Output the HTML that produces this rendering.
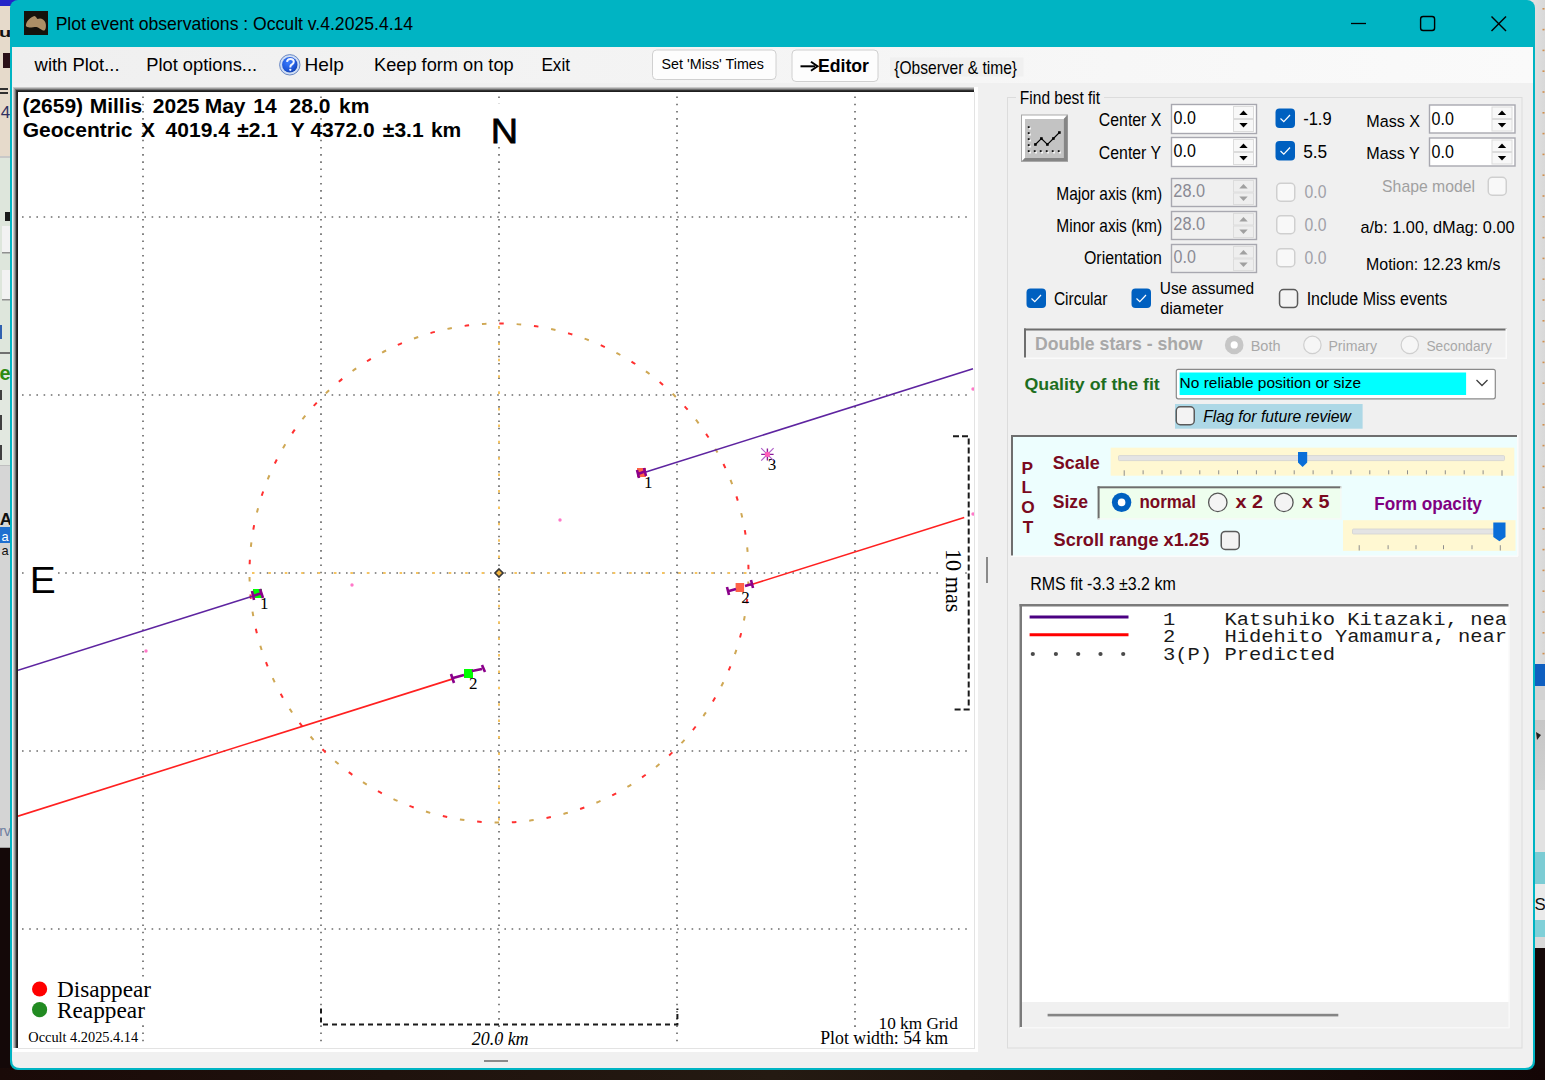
<!DOCTYPE html>
<html><head><meta charset="utf-8"><style>
html,body{margin:0;padding:0;width:1545px;height:1080px;overflow:hidden;background:#140808}
svg text{white-space:pre}
</style></head><body>
<svg width="1545" height="1080" viewBox="0 0 1545 1080" style="display:block">
<rect x="0" y="0" width="1545" height="1080" fill="#140808" />
<defs><linearGradient id="dk" x1="0" x2="1" y1="0" y2="0"><stop offset="0" stop-color="#1a0a08"/><stop offset="0.5" stop-color="#241a12"/><stop offset="1" stop-color="#140606"/></linearGradient></defs>
<rect x="0" y="1068" width="1545" height="12" fill="url(#dk)" />
<rect x="0" y="0" width="24" height="6" fill="#2424C8" />
<rect x="0" y="6" width="20" height="150" fill="#E6DACB" />
<text transform="translate(0.00,37.00) scale(1.5625,1)" x="-0.60" y="0" font-family="Liberation Sans" font-size="12.80" font-weight="bold" font-style="normal" fill="#101010" >u</text>
<rect x="3" y="53" width="7" height="15" fill="#2a1018" />
<rect x="0" y="88" width="8" height="2" fill="#303030" />
<rect x="0" y="92" width="8" height="2" fill="#303030" />
<text x="0.73" y="118.00" font-family="Liberation Sans" font-size="17.07" font-weight="normal" font-style="normal" fill="#303060" >4</text>
<rect x="0" y="156" width="10" height="2" fill="#C8C8C8" />
<rect x="0" y="158" width="10" height="195" fill="#DEE6DC" />
<rect x="5" y="212" width="5" height="9" fill="#1a1a1a" />
<rect x="2" y="226" width="8" height="27" fill="#F2F2F2" />
<rect x="2" y="252" width="8" height="1.5" fill="#909090" />
<rect x="2" y="270" width="8" height="30" fill="#F2F2F2" />
<rect x="2" y="299" width="8" height="1.5" fill="#909090" />
<rect x="0" y="325" width="2" height="14" fill="#3060B0" />
<rect x="0" y="352" width="10" height="2" fill="#707070" />
<rect x="0" y="354" width="10" height="111" fill="#E2E8E0" />
<text x="-0.62" y="380.00" font-family="Liberation Sans" font-size="19.91" font-weight="bold" font-style="normal" fill="#2E8A10" >er</text>
<rect x="0" y="390" width="2" height="10" fill="#404040" />
<rect x="0" y="415" width="2" height="15" fill="#404040" />
<rect x="0" y="445" width="2" height="15" fill="#404040" />
<rect x="0" y="465" width="10" height="1" fill="#C0C0C0" />
<rect x="0" y="466" width="10" height="61" fill="#D6D6D6" />
<text x="-0.27" y="525.00" font-family="Liberation Sans" font-size="17.07" font-weight="bold" font-style="normal" fill="#101010" >A</text>
<rect x="0" y="527" width="10" height="16" fill="#1F6FD0" />
<text x="1.60" y="541.00" font-family="Liberation Sans" font-size="12.80" font-weight="normal" font-style="normal" fill="#FFFFFF" >a</text>
<rect x="0" y="543" width="10" height="304" fill="#D4D4D4" />
<text x="1.60" y="555.00" font-family="Liberation Sans" font-size="12.80" font-weight="normal" font-style="normal" fill="#101010" >a</text>
<text x="-0.89" y="836.00" font-family="Liberation Sans" font-size="14.22" font-weight="normal" font-style="normal" fill="#6E7EA0" >rv</text>
<rect x="0" y="847" width="10" height="1" fill="#A0A0A0" />
<defs><linearGradient id="rs" x1="0" x2="1" y1="0" y2="0"><stop offset="0" stop-color="#EAEAEA"/><stop offset="1" stop-color="#D8D8D8"/></linearGradient></defs>
<rect x="1520" y="0" width="25" height="664" fill="url(#rs)" />
<rect x="1542.5" y="8.0" width="2" height="1.6" fill="#D09050" />
<rect x="1542.5" y="28.8" width="2" height="1.6" fill="#D09050" />
<rect x="1542.5" y="49.6" width="2" height="1.6" fill="#D09050" />
<rect x="1542.5" y="70.4" width="2" height="1.6" fill="#D09050" />
<rect x="1542.5" y="91.2" width="2" height="1.6" fill="#D09050" />
<rect x="1542.5" y="112.0" width="2" height="1.6" fill="#D09050" />
<rect x="1542.5" y="132.8" width="2" height="1.6" fill="#D09050" />
<rect x="1542.5" y="153.6" width="2" height="1.6" fill="#D09050" />
<rect x="1542.5" y="174.4" width="2" height="1.6" fill="#D09050" />
<rect x="1542.5" y="195.20000000000002" width="2" height="1.6" fill="#D09050" />
<rect x="1542.5" y="216.0" width="2" height="1.6" fill="#D09050" />
<rect x="1542.5" y="236.8" width="2" height="1.6" fill="#D09050" />
<rect x="1542.5" y="257.6" width="2" height="1.6" fill="#D09050" />
<rect x="1542.5" y="278.40000000000003" width="2" height="1.6" fill="#D09050" />
<rect x="1542.5" y="299.2" width="2" height="1.6" fill="#D09050" />
<rect x="1542.5" y="320.0" width="2" height="1.6" fill="#D09050" />
<rect x="1542.5" y="340.8" width="2" height="1.6" fill="#D09050" />
<rect x="1542.5" y="361.6" width="2" height="1.6" fill="#D09050" />
<rect x="1542.5" y="382.40000000000003" width="2" height="1.6" fill="#D09050" />
<rect x="1542.5" y="403.2" width="2" height="1.6" fill="#D09050" />
<rect x="1542.5" y="424.0" width="2" height="1.6" fill="#D09050" />
<rect x="1542.5" y="444.8" width="2" height="1.6" fill="#D09050" />
<rect x="1542.5" y="465.6" width="2" height="1.6" fill="#D09050" />
<rect x="1542.5" y="486.40000000000003" width="2" height="1.6" fill="#D09050" />
<rect x="1542.5" y="507.20000000000005" width="2" height="1.6" fill="#D09050" />
<rect x="1542.5" y="528.0" width="2" height="1.6" fill="#D09050" />
<rect x="1542.5" y="548.8000000000001" width="2" height="1.6" fill="#D09050" />
<rect x="1542.5" y="569.6" width="2" height="1.6" fill="#D09050" />
<rect x="1542.5" y="590.4" width="2" height="1.6" fill="#D09050" />
<rect x="1542.5" y="611.2" width="2" height="1.6" fill="#D09050" />
<rect x="1542.5" y="632.0" width="2" height="1.6" fill="#D09050" />
<rect x="1542.5" y="652.8000000000001" width="2" height="1.6" fill="#D09050" />
<rect x="1535" y="664" width="10" height="22" fill="#0F5FC0" />
<rect x="1535" y="686" width="10" height="14" fill="#D2D2D2" />
<defs><linearGradient id="rs2" x1="0" x2="0" y1="0" y2="1"><stop offset="0" stop-color="#C4C4C4"/><stop offset="1" stop-color="#D0D0D0"/></linearGradient></defs>
<rect x="1535" y="700" width="10" height="90" fill="url(#rs2)" />
<path d="M1536,732 L1541,735 L1537,740 Z" fill="#202020"/>
<rect x="1535" y="700" width="10" height="20" fill="#D8D8D8" />
<rect x="1535" y="790" width="10" height="62" fill="#E2E2E2" />
<rect x="1535" y="852" width="10" height="32" fill="#7CCCD4" />
<rect x="1535" y="884" width="10" height="36" fill="#EAEAEA" />
<text transform="translate(1535.00,910.00) scale(0.9868,1)" x="-0.53" y="0" font-family="Liberation Sans" font-size="17.07" font-weight="normal" font-style="normal" fill="#101010" >S</text>
<rect x="1535" y="920" width="10" height="17" fill="#80D0D8" />
<rect x="1535" y="937" width="10" height="11" fill="#D8D8D8" />
<rect x="10" y="0" width="1525" height="1070" rx="8" ry="8" fill="#00B4C3"/>
<path d="M12,47 H1533 V1060 Q1533,1068 1525,1068 H20 Q12,1068 12,1060 Z" fill="#F0F0F0"/>
<defs><linearGradient id="mg" x1="0" x2="1" y1="0" y2="0"><stop offset="0" stop-color="#EFEFEF"/><stop offset="1" stop-color="#FAFAFA"/></linearGradient></defs>
<rect x="12" y="47" width="1521" height="36" fill="url(#mg)" />
<rect x="24" y="11" width="24" height="24" fill="#15120C" />
<path d="M25.9,25.6 C26,21 31,17 34.4,16 C36,16 36.5,18.5 37.5,19 C39,18.5 41,18 43,19.5 C45.5,21 46.2,24 45.9,27 C45.5,30 44.5,31 43,30.5 C40.5,29 38.5,27.5 36.5,26.9 C33.5,27 30.5,27.8 28.5,27.3 C26.5,27 25.8,26.5 25.9,25.6 Z" fill="#AD8F66"/>
<text transform="translate(57.00,29.60) scale(1.0063,1)" x="-1.37" y="0" font-family="Liberation Sans" font-size="17.49" font-weight="normal" font-style="normal" fill="#000" >Plot event observations : Occult v.4.2025.4.14</text>
<line x1="1351.00" y1="23.50" x2="1366.00" y2="23.50" stroke="#000" stroke-width="1.3" />
<rect x="1420.6" y="16.5" width="14" height="14" rx="2.5" fill="none" stroke="#000" stroke-width="1.4"/>
<line x1="1491.50" y1="16.50" x2="1506.00" y2="31.00" stroke="#000" stroke-width="1.4" />
<line x1="1506.00" y1="16.50" x2="1491.50" y2="31.00" stroke="#000" stroke-width="1.4" />
<text transform="translate(34.30,71.10) scale(0.9976,1)" x="0.29" y="0" font-family="Liberation Sans" font-size="18.49" font-weight="normal" font-style="normal" fill="#000" >with Plot...</text>
<text transform="translate(147.60,71.10) scale(0.9907,1)" x="-1.44" y="0" font-family="Liberation Sans" font-size="18.49" font-weight="normal" font-style="normal" fill="#000" >Plot options...</text>
<defs><radialGradient id="hg" cx="0.4" cy="0.35" r="0.7"><stop offset="0" stop-color="#3A7CFF"/><stop offset="0.7" stop-color="#1E56D8"/><stop offset="1" stop-color="#123EA8"/></radialGradient></defs>
<circle cx="289.8" cy="64.8" r="10.2" fill="#D0DEF4" stroke="#6A88C4" stroke-width="1"/>
<circle cx="289.8" cy="64.8" r="7.7" fill="url(#hg)"/>
<path d="M287,61.8 C287.2,59.6 288.8,58.9 290.4,58.9 C292.4,58.9 293.8,60 293.8,61.7 C293.8,63.4 292.4,64.1 291.3,64.9 C290.5,65.5 290.3,66.2 290.3,67.4" stroke="#F0F4FF" stroke-width="2" fill="none"/>
<circle cx="290.3" cy="69.8" r="1.15" fill="#F0F4FF"/>
<text transform="translate(306.00,71.10) scale(1.0326,1)" x="-1.44" y="0" font-family="Liberation Sans" font-size="18.49" font-weight="normal" font-style="normal" fill="#000" >Help</text>
<text transform="translate(375.40,71.10) scale(0.9854,1)" x="-1.44" y="0" font-family="Liberation Sans" font-size="18.49" font-weight="normal" font-style="normal" fill="#000" >Keep form on top</text>
<text transform="translate(542.70,71.10) scale(0.9273,1)" x="-1.44" y="0" font-family="Liberation Sans" font-size="18.49" font-weight="normal" font-style="normal" fill="#000" >Exit</text>
<rect x="652.5" y="50" width="123.5" height="29.5" rx="4" fill="#FDFDFD" stroke="#D0D0D0" stroke-width="1"/>
<text transform="translate(662.00,69.30) scale(0.9959,1)" x="-0.45" y="0" font-family="Liberation Sans" font-size="14.36" font-weight="normal" font-style="normal" fill="#000" >Set 'Miss' Times</text>
<rect x="792" y="50" width="86" height="31.5" rx="4" fill="#FDFDFD" stroke="#D0D0D0" stroke-width="1"/>
<path d="M800.5,66.3 H815" stroke="#000" stroke-width="2"/><path d="M811,61.8 L817.5,66.3 L811,70.8" stroke="#000" stroke-width="2" fill="none"/>
<text transform="translate(819.00,72.40) scale(0.9559,1)" x="-1.16" y="0" font-family="Liberation Sans" font-size="18.49" font-weight="bold" font-style="normal" fill="#000" >Editor</text>
<rect x="890" y="57.4" width="133.5" height="19.1" fill="#F0F0F0" />
<text transform="translate(894.50,74.00) scale(0.8228,1)" x="-0.30" y="0" font-family="Liberation Sans" font-size="18.92" font-weight="normal" font-style="normal" fill="#000" >{Observer &amp; time}</text>
<rect x="13" y="87" width="965" height="965" fill="#FFFFFF" />
<rect x="13" y="87" width="961" height="1" fill="#C8C8C8" />
<rect x="13" y="87" width="1" height="961" fill="#C8C8C8" />
<rect x="14" y="88" width="960" height="1" fill="#A0A0A0" />
<rect x="14" y="88" width="1" height="960" fill="#A0A0A0" />
<rect x="15" y="89" width="959" height="1" fill="#707070" />
<rect x="15" y="89" width="1" height="959" fill="#707070" />
<rect x="16" y="90" width="958" height="1" fill="#303030" />
<rect x="16" y="90" width="1" height="958" fill="#303030" />
<rect x="17" y="91" width="957" height="1" fill="#1E1E1E" />
<rect x="17" y="91" width="1" height="957" fill="#1E1E1E" />
<rect x="974" y="92" width="1" height="957" fill="#E3E3E3" />
<rect x="18" y="1048" width="957" height="1" fill="#E3E3E3" />
<svg x="18" y="92" width="956" height="956" overflow="hidden"><g transform="translate(-18,-92)">
<line x1="143.00" y1="96.50" x2="143.00" y2="1047.00" stroke="#6E6E6E" stroke-width="1.7" stroke-dasharray="1.6 5.6"/>
<line x1="321.00" y1="96.50" x2="321.00" y2="1047.00" stroke="#6E6E6E" stroke-width="1.7" stroke-dasharray="1.6 5.6"/>
<line x1="499.00" y1="96.50" x2="499.00" y2="1047.00" stroke="#6E6E6E" stroke-width="1.7" stroke-dasharray="1.6 5.6"/>
<line x1="677.00" y1="96.50" x2="677.00" y2="1047.00" stroke="#6E6E6E" stroke-width="1.7" stroke-dasharray="1.6 5.6"/>
<line x1="855.00" y1="96.50" x2="855.00" y2="1047.00" stroke="#6E6E6E" stroke-width="1.7" stroke-dasharray="1.6 5.6"/>
<line x1="22.00" y1="217.00" x2="968.00" y2="217.00" stroke="#6E6E6E" stroke-width="1.7" stroke-dasharray="1.6 5.6"/>
<line x1="22.00" y1="395.00" x2="968.00" y2="395.00" stroke="#6E6E6E" stroke-width="1.7" stroke-dasharray="1.6 5.6"/>
<line x1="22.00" y1="573.00" x2="968.00" y2="573.00" stroke="#6E6E6E" stroke-width="1.7" stroke-dasharray="1.6 5.6"/>
<line x1="22.00" y1="751.00" x2="968.00" y2="751.00" stroke="#6E6E6E" stroke-width="1.7" stroke-dasharray="1.6 5.6"/>
<line x1="22.00" y1="929.00" x2="968.00" y2="929.00" stroke="#6E6E6E" stroke-width="1.7" stroke-dasharray="1.6 5.6"/>
<line x1="499.00" y1="323.50" x2="499.00" y2="822.50" stroke="#F6C460" stroke-width="2" stroke-dasharray="2.5 13.9" stroke-dashoffset="-2.5"/>
<line x1="249.50" y1="573.00" x2="748.50" y2="573.00" stroke="#F6C460" stroke-width="2" stroke-dasharray="2.5 13.9" stroke-dashoffset="-2.5"/>
<circle cx="499" cy="573" r="249.5" fill="none" stroke="#FF3030" stroke-width="2" stroke-dasharray="4.5 30.337" stroke-dashoffset="8.9"/>
<circle cx="499" cy="573" r="249.5" fill="none" stroke="#CFA855" stroke-width="2" stroke-dasharray="4.5 30.337" stroke-dashoffset="-8.518"/>
<path d="M499,569 L503,573 L499,577 L495,573 Z" fill="#F2B440" stroke="#383838" stroke-width="1.7"/>
<line x1="18.00" y1="670.24" x2="254.00" y2="595.73" stroke="#5E24A0" stroke-width="1.6" />
<line x1="645.00" y1="472.29" x2="973.00" y2="368.74" stroke="#5E24A0" stroke-width="1.6" />
<line x1="18.00" y1="816.14" x2="452.00" y2="679.12" stroke="#FF2020" stroke-width="1.6" />
<line x1="750.00" y1="585.04" x2="964.20" y2="517.42" stroke="#FF2020" stroke-width="1.6" />
<rect x="253" y="589" width="9" height="9" fill="#00FF00" />
<path d="M253,596 L262,593 M252,591 L254,600 M260,589 L263,598" stroke="#8B008B" stroke-width="2.6" fill="none"/>
<rect x="637" y="468" width="9" height="9" fill="#FF6347" />
<path d="M638,474 L646,471 M637,470 L639,478 M644,468 L646,476" stroke="#8B008B" stroke-width="2.6" fill="none"/>
<rect x="464" y="669" width="9" height="9" fill="#00FF00" />
<path d="M453,678 L464,675 M472,671 L482,669 M451,674 L454,683 M482,665 L485,672" stroke="#8B008B" stroke-width="2.6" fill="none"/>
<rect x="735.6" y="583" width="8.5" height="9" fill="#FF6347" />
<path d="M729,591 L736,589 M745,586 L752,584 M727,587 L729,595 M751,580 L753,588" stroke="#8B008B" stroke-width="2.6" fill="none"/>
<text x="260.07" y="609.00" font-family="Liberation Serif" font-size="17.00" font-weight="normal" font-style="normal" fill="#000" >1</text>
<text x="644.07" y="488.00" font-family="Liberation Serif" font-size="17.00" font-weight="normal" font-style="normal" fill="#000" >1</text>
<text x="468.97" y="688.80" font-family="Liberation Serif" font-size="17.00" font-weight="normal" font-style="normal" fill="#000" >2</text>
<text x="741.37" y="603.30" font-family="Liberation Serif" font-size="17.00" font-weight="normal" font-style="normal" fill="#000" >2</text>
<text x="767.70" y="469.60" font-family="Liberation Serif" font-size="17.00" font-weight="normal" font-style="normal" fill="#000" >3</text>
<path d="M761.1999999999999,454.4 L773.6,454.4 M767.4,448.4 L767.4,460.4" stroke="#8A1A9A" stroke-width="1.4" fill="none"/>
<path d="M761.1999999999999,448.2 L773.6,460.59999999999997 M773.6,448.2 L761.1999999999999,460.59999999999997" stroke="#B060C8" stroke-width="1.2" fill="none"/>
<circle cx="767.4" cy="454.4" r="2.6" fill="#FF5CB8"/>
<circle cx="560" cy="520" r="1.7" fill="#FF78C8"/>
<circle cx="352" cy="585" r="1.7" fill="#FF78C8"/>
<circle cx="146" cy="651" r="1.7" fill="#FF78C8"/>
<circle cx="973" cy="389" r="1.7" fill="#FF78C8"/>
<circle cx="973" cy="514" r="1.7" fill="#FF78C8"/>
<text x="22.42" y="113.00" font-family="Liberation Sans" font-size="21.00" font-weight="bold" font-style="normal" fill="#000" >(2659)</text>
<text x="89.69" y="113.00" font-family="Liberation Sans" font-size="21.00" font-weight="bold" font-style="normal" fill="#000" >Millis</text>
<text x="152.84" y="113.00" font-family="Liberation Sans" font-size="21.00" font-weight="bold" font-style="normal" fill="#000" >2025</text>
<text x="204.69" y="113.00" font-family="Liberation Sans" font-size="21.00" font-weight="bold" font-style="normal" fill="#000" >May</text>
<text x="253.29" y="113.00" font-family="Liberation Sans" font-size="21.00" font-weight="bold" font-style="normal" fill="#000" >14</text>
<text x="289.54" y="113.00" font-family="Liberation Sans" font-size="21.00" font-weight="bold" font-style="normal" fill="#000" >28.0</text>
<text x="339.09" y="113.00" font-family="Liberation Sans" font-size="21.00" font-weight="bold" font-style="normal" fill="#000" >km</text>
<text x="22.74" y="137.00" font-family="Liberation Sans" font-size="21.00" font-weight="bold" font-style="normal" fill="#000" >Geocentric</text>
<text x="141.00" y="137.00" font-family="Liberation Sans" font-size="21.00" font-weight="bold" font-style="normal" fill="#000" >X</text>
<text x="165.60" y="137.00" font-family="Liberation Sans" font-size="21.00" font-weight="bold" font-style="normal" fill="#000" >4019.4</text>
<text x="237.27" y="137.00" font-family="Liberation Sans" font-size="21.00" font-weight="bold" font-style="normal" fill="#000" >±2.1</text>
<text x="290.67" y="137.00" font-family="Liberation Sans" font-size="21.00" font-weight="bold" font-style="normal" fill="#000" >Y</text>
<text x="310.40" y="137.00" font-family="Liberation Sans" font-size="21.00" font-weight="bold" font-style="normal" fill="#000" >4372.0</text>
<text x="382.87" y="137.00" font-family="Liberation Sans" font-size="21.00" font-weight="bold" font-style="normal" fill="#000" >±3.1</text>
<text x="430.89" y="137.00" font-family="Liberation Sans" font-size="21.00" font-weight="bold" font-style="normal" fill="#000" >km</text>
<rect x="488" y="104" width="32" height="42" fill="#fff" />
<text transform="translate(493.80,142.50) scale(1.0779,1)" x="-2.74" y="0" font-family="Liberation Sans" font-size="35.13" font-weight="normal" font-style="normal" fill="#000" stroke="#000" stroke-width="0.75">N</text>
<rect x="26" y="560" width="30" height="38" fill="#fff" />
<text transform="translate(32.70,593.00) scale(1.0782,1)" x="-2.82" y="0" font-family="Liberation Sans" font-size="36.12" font-weight="normal" font-style="normal" fill="#000" >E</text>
<rect x="938" y="545" width="26" height="72" fill="#fff" />
<path d="M953,436.3 H968.7 V709.5 H954" fill="none" stroke="#1A1A1A" stroke-width="2" stroke-dasharray="6 3"/>
<text transform="translate(946.3,549) rotate(90)" x="0" y="0" font-family="Liberation Serif" font-size="22.2" fill="#000">10 mas</text>
<path d="M321,1008.5 V1024.5 H677.4 V1008.5" fill="none" stroke="#1A1A1A" stroke-width="2" stroke-dasharray="5 4"/>
<text x="471.70" y="1044.70" font-family="Liberation Serif" font-size="17.98" font-weight="normal" font-style="italic" fill="#000" >20.0 km</text>
<text x="878.55" y="1028.50" font-family="Liberation Serif" font-size="17.23" font-weight="normal" font-style="normal" fill="#000" >10 km Grid</text>
<rect x="818" y="1030" width="132" height="18" fill="#fff" />
<text x="820.22" y="1043.90" font-family="Liberation Serif" font-size="17.79" font-weight="normal" font-style="normal" fill="#000" >Plot width: 54 km</text>
<rect x="25" y="980" width="127" height="44" fill="#fff" />
<circle cx="39.6" cy="989" r="7.6" fill="#FF0000"/>
<circle cx="39.6" cy="1009.7" r="7.6" fill="#228B22"/>
<text x="56.94" y="996.90" font-family="Liberation Serif" font-size="23.23" font-weight="normal" font-style="normal" fill="#000" >Disappear</text>
<text x="56.94" y="1017.60" font-family="Liberation Serif" font-size="23.30" font-weight="normal" font-style="normal" fill="#000" >Reappear</text>
<text x="28.35" y="1041.50" font-family="Liberation Serif" font-size="14.33" font-weight="normal" font-style="normal" fill="#000" >Occult 4.2025.4.14</text>
</g></svg>
<rect x="986" y="557" width="2" height="26" fill="#8A8A8A" />
<rect x="484" y="1060" width="24" height="2" fill="#8A8A8A" />
<rect x="1007.5" y="97.5" width="514.5" height="950.5" fill="none" stroke="#DCDCDC" stroke-width="1"/>
<rect x="1016" y="90" width="88" height="14" fill="#F0F0F0" />
<text transform="translate(1021.00,103.70) scale(0.8676,1)" x="-1.40" y="0" font-family="Liberation Sans" font-size="17.92" font-weight="normal" font-style="normal" fill="#000" >Find best fit</text>
<rect x="1021" y="114.5" width="47" height="47.5" fill="#A8A8A8" />
<path d="M1022,115.5 H1066.5 L1063.8,119 H1025 V158 L1022,161 Z" fill="#FFFFFF"/>
<path d="M1067.5,115.5 V161 H1022 L1025,158 H1063.8 V119 Z" fill="#858585"/>
<rect x="1025" y="119" width="38.8" height="39" fill="#C3C3C3" />
<rect x="1029.0" y="127.5" width="2" height="2" fill="#F4F4F4" />
<rect x="1027.8" y="126.2" width="1.8" height="1.8" fill="#111" />
<rect x="1029.0" y="133.5" width="2" height="2" fill="#F4F4F4" />
<rect x="1027.8" y="132.2" width="1.8" height="1.8" fill="#111" />
<rect x="1029.0" y="139.5" width="2" height="2" fill="#F4F4F4" />
<rect x="1027.8" y="138.2" width="1.8" height="1.8" fill="#111" />
<rect x="1029.0" y="145.5" width="2" height="2" fill="#F4F4F4" />
<rect x="1027.8" y="144.2" width="1.8" height="1.8" fill="#111" />
<rect x="1029.0" y="151.5" width="2" height="2" fill="#F4F4F4" />
<rect x="1027.8" y="150.2" width="1.8" height="1.8" fill="#111" />
<rect x="1035.0" y="151.5" width="2" height="2" fill="#F4F4F4" />
<rect x="1033.8" y="150.2" width="1.8" height="1.8" fill="#111" />
<rect x="1041.0" y="151.5" width="2" height="2" fill="#F4F4F4" />
<rect x="1039.8" y="150.2" width="1.8" height="1.8" fill="#111" />
<rect x="1047.0" y="151.5" width="2" height="2" fill="#F4F4F4" />
<rect x="1045.8" y="150.2" width="1.8" height="1.8" fill="#111" />
<rect x="1053.0" y="151.5" width="2" height="2" fill="#F4F4F4" />
<rect x="1051.8" y="150.2" width="1.8" height="1.8" fill="#111" />
<rect x="1059.0" y="151.5" width="2" height="2" fill="#F4F4F4" />
<rect x="1057.8" y="150.2" width="1.8" height="1.8" fill="#111" />
<path d="M1035.4,144.5 L1041.4,138.5 L1047.4,144.5 L1053.4,138.5 L1059.4,132.5" stroke="#000" stroke-width="1.1" fill="none"/>
<rect x="1034.1000000000001" y="143.2" width="2.6" height="2.6" fill="#000" />
<rect x="1040.1000000000001" y="137.2" width="2.6" height="2.6" fill="#000" />
<rect x="1046.1000000000001" y="143.2" width="2.6" height="2.6" fill="#000" />
<rect x="1052.1000000000001" y="137.2" width="2.6" height="2.6" fill="#000" />
<rect x="1058.1000000000001" y="131.2" width="2.6" height="2.6" fill="#000" />
<text transform="translate(1099.60,126.30) scale(0.8702,1)" x="-0.85" y="0" font-family="Liberation Sans" font-size="18.20" font-weight="normal" font-style="normal" fill="#000" >Center X</text>
<text transform="translate(1099.60,158.70) scale(0.8702,1)" x="-0.85" y="0" font-family="Liberation Sans" font-size="18.20" font-weight="normal" font-style="normal" fill="#000" >Center Y</text>
<rect x="1171.5" y="104.5" width="85" height="29" fill="#FFFFFF" stroke="#A8A8B0" stroke-width="1.4"/>
<rect x="1233.5" y="106.5" width="20" height="12.0" fill="#F8F8F8" stroke="#DCDCDC" stroke-width="1"/>
<rect x="1233.5" y="119.5" width="20" height="12.0" fill="#F8F8F8" stroke="#DCDCDC" stroke-width="1"/>
<path d="M1239.3,115.0 L1247.7,115.0 L1243.5,110.5 Z" fill="#000"/>
<path d="M1239.3,123.0 L1247.7,123.0 L1243.5,127.5 Z" fill="#000"/>
<text transform="translate(1174.10,124.00) scale(0.8418,1)" x="-0.60" y="0" font-family="Liberation Sans" font-size="19.06" font-weight="normal" font-style="normal" fill="#000" >0.0</text>
<rect x="1171.5" y="137.5" width="85" height="29" fill="#FFFFFF" stroke="#A8A8B0" stroke-width="1.4"/>
<rect x="1233.5" y="139.5" width="20" height="12.0" fill="#F8F8F8" stroke="#DCDCDC" stroke-width="1"/>
<rect x="1233.5" y="152.5" width="20" height="12.0" fill="#F8F8F8" stroke="#DCDCDC" stroke-width="1"/>
<path d="M1239.3,148.0 L1247.7,148.0 L1243.5,143.5 Z" fill="#000"/>
<path d="M1239.3,156.0 L1247.7,156.0 L1243.5,160.5 Z" fill="#000"/>
<text transform="translate(1174.10,157.00) scale(0.8418,1)" x="-0.60" y="0" font-family="Liberation Sans" font-size="19.06" font-weight="normal" font-style="normal" fill="#000" >0.0</text>
<rect x="1275.5" y="108.5" width="19.5" height="19.5" rx="4" fill="#0060C0"/>
<path d="M1280.5,118.5 L1283.8,121.7 L1290.0,115.0" stroke="#fff" stroke-width="1.2" fill="none"/>
<rect x="1275.5" y="141" width="19.5" height="19.5" rx="4" fill="#0060C0"/>
<path d="M1280.5,151 L1283.8,154.2 L1290.0,147.5" stroke="#fff" stroke-width="1.2" fill="none"/>
<text transform="translate(1303.70,125.00) scale(0.8909,1)" x="-0.58" y="0" font-family="Liberation Sans" font-size="18.49" font-weight="normal" font-style="normal" fill="#000" >-1.9</text>
<text transform="translate(1303.70,157.80) scale(0.9354,1)" x="-0.58" y="0" font-family="Liberation Sans" font-size="18.49" font-weight="normal" font-style="normal" fill="#000" >5.5</text>
<text transform="translate(1367.50,126.50) scale(0.9461,1)" x="-1.33" y="0" font-family="Liberation Sans" font-size="17.07" font-weight="normal" font-style="normal" fill="#000" >Mass X</text>
<text transform="translate(1367.50,159.00) scale(0.9461,1)" x="-1.33" y="0" font-family="Liberation Sans" font-size="17.07" font-weight="normal" font-style="normal" fill="#000" >Mass Y</text>
<rect x="1429.5" y="105.0" width="85.5" height="28" fill="#FFFFFF" stroke="#A8A8B0" stroke-width="1.4"/>
<rect x="1492.0" y="107.0" width="20" height="11.5" fill="#F8F8F8" stroke="#DCDCDC" stroke-width="1"/>
<rect x="1492.0" y="119.5" width="20" height="11.5" fill="#F8F8F8" stroke="#DCDCDC" stroke-width="1"/>
<path d="M1497.8,115.0 L1506.2,115.0 L1502.0,110.5 Z" fill="#000"/>
<path d="M1497.8,123.0 L1506.2,123.0 L1502.0,127.5 Z" fill="#000"/>
<text transform="translate(1432.10,124.50) scale(0.8418,1)" x="-0.60" y="0" font-family="Liberation Sans" font-size="19.06" font-weight="normal" font-style="normal" fill="#000" >0.0</text>
<rect x="1429.5" y="138.0" width="85.5" height="28" fill="#FFFFFF" stroke="#A8A8B0" stroke-width="1.4"/>
<rect x="1492.0" y="140.0" width="20" height="11.5" fill="#F8F8F8" stroke="#DCDCDC" stroke-width="1"/>
<rect x="1492.0" y="152.5" width="20" height="11.5" fill="#F8F8F8" stroke="#DCDCDC" stroke-width="1"/>
<path d="M1497.8,148.0 L1506.2,148.0 L1502.0,143.5 Z" fill="#000"/>
<path d="M1497.8,156.0 L1506.2,156.0 L1502.0,160.5 Z" fill="#000"/>
<text transform="translate(1432.10,157.50) scale(0.8418,1)" x="-0.60" y="0" font-family="Liberation Sans" font-size="19.06" font-weight="normal" font-style="normal" fill="#000" >0.0</text>
<text transform="translate(1382.60,191.70) scale(0.9089,1)" x="-0.54" y="0" font-family="Liberation Sans" font-size="17.35" font-weight="normal" font-style="normal" fill="#A0A0A0" >Shape model</text>
<rect x="1488.25" y="177.25" width="18" height="18" rx="4" fill="#F8F8F8" stroke="#CFCFCF" stroke-width="1.5"/>
<text transform="translate(1057.50,200.00) scale(0.8256,1)" x="-1.47" y="0" font-family="Liberation Sans" font-size="18.77" font-weight="normal" font-style="normal" fill="#000" >Major axis (km)</text>
<text transform="translate(1057.50,232.00) scale(0.8256,1)" x="-1.47" y="0" font-family="Liberation Sans" font-size="18.77" font-weight="normal" font-style="normal" fill="#000" >Minor axis (km)</text>
<text transform="translate(1084.70,264.00) scale(0.8487,1)" x="-0.88" y="0" font-family="Liberation Sans" font-size="18.77" font-weight="normal" font-style="normal" fill="#000" >Orientation</text>
<rect x="1171.5" y="178.5" width="85" height="28" fill="#F0F0F0" stroke="#A8A8B0" stroke-width="1.4"/>
<rect x="1233.5" y="180.5" width="20" height="11.5" fill="#EEEEEE" stroke="#DCDCDC" stroke-width="1"/>
<rect x="1233.5" y="193.0" width="20" height="11.5" fill="#EEEEEE" stroke="#DCDCDC" stroke-width="1"/>
<path d="M1239.3,188.5 L1247.7,188.5 L1243.5,184.0 Z" fill="#A0A0A0"/>
<path d="M1239.3,196.5 L1247.7,196.5 L1243.5,201.0 Z" fill="#A0A0A0"/>
<text transform="translate(1174.10,197.30) scale(0.8566,1)" x="-0.89" y="0" font-family="Liberation Sans" font-size="19.06" font-weight="normal" font-style="normal" fill="#8A8A94" >28.0</text>
<rect x="1171.5" y="211.5" width="85" height="28" fill="#F0F0F0" stroke="#A8A8B0" stroke-width="1.4"/>
<rect x="1233.5" y="213.5" width="20" height="11.5" fill="#EEEEEE" stroke="#DCDCDC" stroke-width="1"/>
<rect x="1233.5" y="226.0" width="20" height="11.5" fill="#EEEEEE" stroke="#DCDCDC" stroke-width="1"/>
<path d="M1239.3,221.5 L1247.7,221.5 L1243.5,217.0 Z" fill="#A0A0A0"/>
<path d="M1239.3,229.5 L1247.7,229.5 L1243.5,234.0 Z" fill="#A0A0A0"/>
<text transform="translate(1174.10,230.30) scale(0.8566,1)" x="-0.89" y="0" font-family="Liberation Sans" font-size="19.06" font-weight="normal" font-style="normal" fill="#8A8A94" >28.0</text>
<rect x="1171.5" y="244.5" width="85" height="28" fill="#F0F0F0" stroke="#A8A8B0" stroke-width="1.4"/>
<rect x="1233.5" y="246.5" width="20" height="11.5" fill="#EEEEEE" stroke="#DCDCDC" stroke-width="1"/>
<rect x="1233.5" y="259.0" width="20" height="11.5" fill="#EEEEEE" stroke="#DCDCDC" stroke-width="1"/>
<path d="M1239.3,254.5 L1247.7,254.5 L1243.5,250.0 Z" fill="#A0A0A0"/>
<path d="M1239.3,262.5 L1247.7,262.5 L1243.5,267.0 Z" fill="#A0A0A0"/>
<text transform="translate(1174.10,263.30) scale(0.8418,1)" x="-0.60" y="0" font-family="Liberation Sans" font-size="19.06" font-weight="normal" font-style="normal" fill="#8A8A94" >0.0</text>
<rect x="1276.75" y="183.25" width="18" height="18" rx="4" fill="#F8F8F8" stroke="#CFCFCF" stroke-width="1.5"/>
<rect x="1276.75" y="215.75" width="18" height="18" rx="4" fill="#F8F8F8" stroke="#CFCFCF" stroke-width="1.5"/>
<rect x="1276.75" y="248.75" width="18" height="18" rx="4" fill="#F8F8F8" stroke="#CFCFCF" stroke-width="1.5"/>
<text transform="translate(1305.00,198.30) scale(0.8999,1)" x="-0.55" y="0" font-family="Liberation Sans" font-size="17.49" font-weight="normal" font-style="normal" fill="#A0A0A8" >0.0</text>
<text transform="translate(1305.00,230.70) scale(0.8999,1)" x="-0.55" y="0" font-family="Liberation Sans" font-size="17.49" font-weight="normal" font-style="normal" fill="#A0A0A8" >0.0</text>
<text transform="translate(1305.00,264.10) scale(0.8999,1)" x="-0.55" y="0" font-family="Liberation Sans" font-size="17.49" font-weight="normal" font-style="normal" fill="#A0A0A8" >0.0</text>
<text transform="translate(1361.00,232.50) scale(0.9970,1)" x="-0.51" y="0" font-family="Liberation Sans" font-size="16.36" font-weight="normal" font-style="normal" fill="#000" >a/b: 1.00, dMag: 0.00</text>
<text transform="translate(1367.30,270.30) scale(0.9822,1)" x="-1.27" y="0" font-family="Liberation Sans" font-size="16.21" font-weight="normal" font-style="normal" fill="#000" >Motion: 12.23 km/s</text>
<rect x="1026.5" y="288.5" width="19.5" height="19.5" rx="4" fill="#0060C0"/>
<path d="M1031.5,298.5 L1034.8,301.7 L1041.0,295.0" stroke="#fff" stroke-width="1.2" fill="none"/>
<text transform="translate(1054.60,305.30) scale(0.8401,1)" x="-0.87" y="0" font-family="Liberation Sans" font-size="18.49" font-weight="normal" font-style="normal" fill="#000" >Circular</text>
<rect x="1131.5" y="288.5" width="19.5" height="19.5" rx="4" fill="#0060C0"/>
<path d="M1136.5,298.5 L1139.8,301.7 L1146.0,295.0" stroke="#fff" stroke-width="1.2" fill="none"/>
<text transform="translate(1160.70,294.40) scale(0.9873,1)" x="-0.98" y="0" font-family="Liberation Sans" font-size="15.64" font-weight="normal" font-style="normal" fill="#000" >Use assumed</text>
<text transform="translate(1160.70,313.70) scale(1.0414,1)" x="-0.49" y="0" font-family="Liberation Sans" font-size="15.64" font-weight="normal" font-style="normal" fill="#000" >diameter</text>
<rect x="1279.55" y="289.55" width="18" height="18" rx="4" fill="#F3F3F3" stroke="#5A5A5A" stroke-width="1.5"/>
<text transform="translate(1307.90,305.30) scale(0.8663,1)" x="-1.44" y="0" font-family="Liberation Sans" font-size="18.49" font-weight="normal" font-style="normal" fill="#000" >Include Miss events</text>
<rect x="1024" y="328.5" width="483" height="30" fill="#F0F0F0" />
<rect x="1024" y="328.5" width="483" height="2" fill="#6E6E6E" />
<rect x="1024" y="328.5" width="2" height="30" fill="#6E6E6E" />
<rect x="1024" y="357.5" width="483" height="1.5" fill="#FAFAFA" />
<rect x="1505.5" y="328.5" width="1.5" height="30" fill="#FAFAFA" />
<text transform="translate(1036.00,350.30) scale(0.9404,1)" x="-1.17" y="0" font-family="Liberation Sans" font-size="18.77" font-weight="bold" font-style="normal" fill="#A8A8A8" >Double stars - show</text>
<circle cx="1234.2" cy="344.9" r="9.3" fill="#C6C6C6"/><circle cx="1234.2" cy="344.9" r="3.6" fill="#fff"/>
<text transform="translate(1251.80,351.00) scale(0.9905,1)" x="-1.14" y="0" font-family="Liberation Sans" font-size="14.65" font-weight="normal" font-style="normal" fill="#A8A8A8" >Both</text>
<circle cx="1312.4" cy="344.9" r="8.7" fill="#F6F6F6" stroke="#CFCFCF" stroke-width="1.2"/>
<text transform="translate(1329.50,351.00) scale(0.9633,1)" x="-1.14" y="0" font-family="Liberation Sans" font-size="14.65" font-weight="normal" font-style="normal" fill="#A8A8A8" >Primary</text>
<circle cx="1409.8" cy="344.9" r="8.7" fill="#F6F6F6" stroke="#CFCFCF" stroke-width="1.2"/>
<text transform="translate(1426.80,351.00) scale(0.9371,1)" x="-0.46" y="0" font-family="Liberation Sans" font-size="14.65" font-weight="normal" font-style="normal" fill="#A8A8A8" >Secondary</text>
<text transform="translate(1025.00,389.90) scale(1.0427,1)" x="-0.53" y="0" font-family="Liberation Sans" font-size="17.07" font-weight="bold" font-style="normal" fill="#1E6E1E" >Quality of the fit</text>
<rect x="1176.3" y="369.3" width="319" height="29.5" rx="2" fill="#FFFFFF" stroke="#8A8A8A" stroke-width="1.2"/>
<rect x="1179.6" y="372.5" width="286.5" height="22.5" fill="#00FFFF" />
<text transform="translate(1180.80,388.40) scale(1.0268,1)" x="-1.18" y="0" font-family="Liberation Sans" font-size="15.08" font-weight="normal" font-style="normal" fill="#000" >No reliable position or size</text>
<path d="M1476.5,380 L1482,385.5 L1487.5,380" stroke="#404040" stroke-width="1.3" fill="none"/>
<rect x="1175" y="404" width="187.6" height="24.7" fill="#ADD8E6" />
<rect x="1176.25" y="406.75" width="18" height="18" rx="4" fill="#F3F3F3" stroke="#5A5A5A" stroke-width="1.5"/>
<text transform="translate(1203.50,421.50) scale(0.9378,1)" x="-0.26" y="0" font-family="Liberation Sans" font-size="16.78" font-weight="normal" font-style="italic" fill="#000" >Flag for future review</text>
<rect x="1011" y="435" width="507" height="121" fill="#EDFEFE" />
<rect x="1011" y="435" width="507" height="2" fill="#6E6E6E" />
<rect x="1011" y="435" width="2" height="121" fill="#6E6E6E" />
<rect x="1011" y="555.5" width="507" height="1.5" fill="#FBFBFB" />
<rect x="1517" y="435" width="1.5" height="121" fill="#FBFBFB" />
<text x="1021.62" y="473.80" font-family="Liberation Sans" font-size="17.30" font-weight="bold" font-style="normal" fill="#7A0A1E" >P</text>
<text x="1021.62" y="493.40" font-family="Liberation Sans" font-size="17.30" font-weight="bold" font-style="normal" fill="#7A0A1E" >L</text>
<text x="1021.16" y="513.00" font-family="Liberation Sans" font-size="17.30" font-weight="bold" font-style="normal" fill="#7A0A1E" >O</text>
<text x="1022.70" y="532.60" font-family="Liberation Sans" font-size="17.30" font-weight="bold" font-style="normal" fill="#7A0A1E" >T</text>
<text transform="translate(1053.00,468.80) scale(0.9734,1)" x="-0.29" y="0" font-family="Liberation Sans" font-size="18.49" font-weight="bold" font-style="normal" fill="#7A0A1E" >Scale</text>
<text transform="translate(1053.00,507.50) scale(0.9518,1)" x="-0.29" y="0" font-family="Liberation Sans" font-size="18.49" font-weight="bold" font-style="normal" fill="#7A0A1E" >Size</text>
<text transform="translate(1053.80,546.20) scale(1.0146,1)" x="-0.28" y="0" font-family="Liberation Sans" font-size="17.92" font-weight="bold" font-style="normal" fill="#7A0A1E" >Scroll range x1.25</text>
<rect x="1110.7" y="447.7" width="403.6" height="28" fill="#FFF8D2" />
<rect x="1118.5" y="455.6" width="386" height="5" rx="1" fill="#E4E4E4" stroke="#D2D2D2" stroke-width="0.8"/>
<rect x="1123.7" y="470.3" width="1" height="5.5" fill="#8E8E8E" />
<rect x="1142.6" y="470.3" width="1" height="4" fill="#8E8E8E" />
<rect x="1161.5" y="470.3" width="1" height="4" fill="#8E8E8E" />
<rect x="1180.4" y="470.3" width="1" height="4" fill="#8E8E8E" />
<rect x="1199.3" y="470.3" width="1" height="4" fill="#8E8E8E" />
<rect x="1218.2" y="470.3" width="1" height="4" fill="#8E8E8E" />
<rect x="1237.0" y="470.3" width="1" height="4" fill="#8E8E8E" />
<rect x="1255.9" y="470.3" width="1" height="4" fill="#8E8E8E" />
<rect x="1274.8" y="470.3" width="1" height="4" fill="#8E8E8E" />
<rect x="1293.7" y="470.3" width="1" height="4" fill="#8E8E8E" />
<rect x="1312.6" y="470.3" width="1" height="4" fill="#8E8E8E" />
<rect x="1331.5" y="470.3" width="1" height="4" fill="#8E8E8E" />
<rect x="1350.4" y="470.3" width="1" height="4" fill="#8E8E8E" />
<rect x="1369.3" y="470.3" width="1" height="4" fill="#8E8E8E" />
<rect x="1388.2" y="470.3" width="1" height="4" fill="#8E8E8E" />
<rect x="1407.0" y="470.3" width="1" height="4" fill="#8E8E8E" />
<rect x="1425.9" y="470.3" width="1" height="4" fill="#8E8E8E" />
<rect x="1444.8" y="470.3" width="1" height="4" fill="#8E8E8E" />
<rect x="1463.7" y="470.3" width="1" height="4" fill="#8E8E8E" />
<rect x="1482.6" y="470.3" width="1" height="4" fill="#8E8E8E" />
<rect x="1501.5" y="470.3" width="1" height="5.5" fill="#8E8E8E" />
<path d="M1298,452 H1307.2 V462.5 L1302.6,467 L1298,462.5 Z" fill="#0A6ED8"/>
<rect x="1097.6" y="486.3" width="243.7" height="33" fill="#EEFEEE" />
<rect x="1097.6" y="486.3" width="243.7" height="2" fill="#6E6E6E" />
<rect x="1097.6" y="486.3" width="2" height="33" fill="#6E6E6E" />
<rect x="1097.6" y="518.3" width="243.7" height="1.2" fill="#F8F8F8" />
<rect x="1340.3" y="486.3" width="1.2" height="33" fill="#F8F8F8" />
<circle cx="1121.6" cy="502.4" r="9.7" fill="#0060C0"/><circle cx="1121.6" cy="502.4" r="3.8" fill="#fff"/>
<text transform="translate(1140.50,508.30) scale(0.9450,1)" x="-1.12" y="0" font-family="Liberation Sans" font-size="17.92" font-weight="bold" font-style="normal" fill="#7A0A1E" >normal</text>
<circle cx="1217.8" cy="502.4" r="9.2" fill="#F4F4F4" stroke="#555" stroke-width="1.3"/>
<text transform="translate(1235.60,508.30) scale(1.1036,1)" x="0.00" y="0" font-family="Liberation Sans" font-size="17.92" font-weight="bold" font-style="normal" fill="#7A0A1E" >x 2</text>
<circle cx="1283.9" cy="502.4" r="9.2" fill="#F4F4F4" stroke="#555" stroke-width="1.3"/>
<text transform="translate(1302.00,508.30) scale(1.1036,1)" x="0.00" y="0" font-family="Liberation Sans" font-size="17.92" font-weight="bold" font-style="normal" fill="#7A0A1E" >x 5</text>
<text transform="translate(1375.30,509.80) scale(0.8931,1)" x="-1.20" y="0" font-family="Liberation Sans" font-size="19.20" font-weight="bold" font-style="normal" fill="#800080" >Form opacity</text>
<rect x="1343" y="520.2" width="172.5" height="30.6" fill="#FFF8D2" />
<rect x="1352.5" y="529" width="152" height="5" rx="1" fill="#E4E4E4" stroke="#D2D2D2" stroke-width="0.8"/>
<rect x="1358.7" y="545.2" width="1" height="5.3" fill="#8E8E8E" />
<rect x="1387.6" y="545.2" width="1" height="4" fill="#8E8E8E" />
<rect x="1415.5" y="545.2" width="1" height="4" fill="#8E8E8E" />
<rect x="1443" y="545.2" width="1" height="4" fill="#8E8E8E" />
<rect x="1471.5" y="545.2" width="1" height="4" fill="#8E8E8E" />
<rect x="1499.8" y="545.2" width="1" height="5.3" fill="#8E8E8E" />
<path d="M1493.3,522.5 H1505.5 V537 L1499.4,541.2 L1493.3,537 Z" fill="#0A6ED8"/>
<rect x="1221.25" y="531.45" width="18" height="18" rx="4" fill="#F3F3F3" stroke="#5A5A5A" stroke-width="1.5"/>
<text transform="translate(1031.50,590.00) scale(0.8921,1)" x="-1.40" y="0" font-family="Liberation Sans" font-size="17.92" font-weight="normal" font-style="normal" fill="#000" >RMS fit -3.3 ±3.2 km</text>
<rect x="1019.5" y="604" width="490" height="424" fill="#FFFFFF" />
<rect x="1019.5" y="604" width="490" height="2.5" fill="#7A7A7A" />
<rect x="1019.5" y="604" width="2.5" height="424" fill="#7A7A7A" />
<rect x="1508.5" y="604" width="1.5" height="424" fill="#F8F8F8" />
<rect x="1019.5" y="1027" width="490" height="1.5" fill="#F8F8F8" />
<rect x="1022" y="1002" width="486.5" height="25" fill="#F0F0F0" />
<rect x="1047.6" y="1013.8" width="290.7" height="2.6" fill="#858585" />
<line x1="1029.60" y1="617.10" x2="1128.50" y2="617.10" stroke="#4B0082" stroke-width="3" />
<line x1="1029.60" y1="634.80" x2="1128.50" y2="634.80" stroke="#FF0000" stroke-width="3" />
<circle cx="1032.8" cy="654" r="2.1" fill="#4A4A4A"/>
<circle cx="1055.9" cy="654" r="2.1" fill="#4A4A4A"/>
<circle cx="1078.2" cy="654" r="2.1" fill="#4A4A4A"/>
<circle cx="1100.5" cy="654" r="2.1" fill="#4A4A4A"/>
<circle cx="1123.2" cy="654" r="2.1" fill="#4A4A4A"/>
<svg x="1022" y="606" width="486.5" height="396" overflow="hidden"><g transform="translate(-1022,-606)">
<text transform="translate(1163,624.6) scale(1,0.91)" x="0" y="0" font-family="Liberation Mono" font-size="20.5" fill="#1A1A1A">1    Katsuhiko Kitazaki, near</text>
<text transform="translate(1163,642.3) scale(1,0.91)" x="0" y="0" font-family="Liberation Mono" font-size="20.5" fill="#1A1A1A">2    Hidehito Yamamura, near</text>
<text transform="translate(1163,659.8) scale(1,0.91)" x="0" y="0" font-family="Liberation Mono" font-size="20.5" fill="#1A1A1A">3(P) Predicted</text>
</g></svg>
</svg>
</body></html>
